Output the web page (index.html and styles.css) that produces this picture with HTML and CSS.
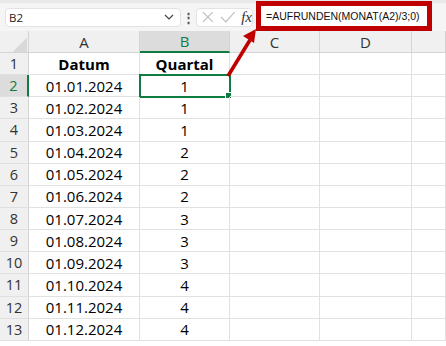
FILE: index.html
```html
<!DOCTYPE html>
<html lang="de">
<head>
<meta charset="UTF-8" />
<meta name="viewport" content="width=device-width, initial-scale=1" />
<title>Quartal aus Datum</title>
<link rel="stylesheet" href="styles.css">
</head>
<body>

<div class="toolbar">
  <div class="namebox">
    <span>B2</span>
    <svg class="chev" width="10" height="6" viewBox="0 0 10 6"><path d="M1 1l4 4 4-4" fill="none" stroke="#444" stroke-width="1.2"/></svg>
  </div>
  <div class="dots">⋮</div>
  <div class="actions">
    <svg width="14" height="14" viewBox="0 0 14 14"><path d="M2 2l10 10M12 2L2 12" stroke="#bdbdbd" stroke-width="1.2"/></svg>
    <svg width="16" height="14" viewBox="0 0 16 14"><path d="M1 7l5 5L15 2" fill="none" stroke="#bdbdbd" stroke-width="1.2"/></svg>
    <span class="fx">fx</span>
  </div>
  <div class="formula">=AUFRUNDEN(MONAT(A2)/3;0)</div>
</div>

<div class="sheet">
  <div class="corner"></div>
  <div class="colhead">A</div>
  <div class="colhead sel">B</div>
  <div class="colhead">C</div>
  <div class="colhead">D</div>
  <div class="colhead"></div>

  <div class="rowhead">1</div>
  <div class="cell bold">Datum</div>
  <div class="cell bold">Quartal</div>
  <div class="cell"></div><div class="cell"></div><div class="cell"></div>

  <div class="rowhead sel">2</div>
  <div class="cell">01.01.2024</div>
  <div class="cell active">1<span class="handle"></span></div>
  <div class="cell"></div><div class="cell"></div><div class="cell"></div>

  <div class="rowhead">3</div>
  <div class="cell">01.02.2024</div><div class="cell">1</div>
  <div class="cell"></div><div class="cell"></div><div class="cell"></div>

  <div class="rowhead">4</div>
  <div class="cell">01.03.2024</div><div class="cell">1</div>
  <div class="cell"></div><div class="cell"></div><div class="cell"></div>

  <div class="rowhead">5</div>
  <div class="cell">01.04.2024</div><div class="cell">2</div>
  <div class="cell"></div><div class="cell"></div><div class="cell"></div>

  <div class="rowhead">6</div>
  <div class="cell">01.05.2024</div><div class="cell">2</div>
  <div class="cell"></div><div class="cell"></div><div class="cell"></div>

  <div class="rowhead">7</div>
  <div class="cell">01.06.2024</div><div class="cell">2</div>
  <div class="cell"></div><div class="cell"></div><div class="cell"></div>

  <div class="rowhead">8</div>
  <div class="cell">01.07.2024</div><div class="cell">3</div>
  <div class="cell"></div><div class="cell"></div><div class="cell"></div>

  <div class="rowhead">9</div>
  <div class="cell">01.08.2024</div><div class="cell">3</div>
  <div class="cell"></div><div class="cell"></div><div class="cell"></div>

  <div class="rowhead">10</div>
  <div class="cell">01.09.2024</div><div class="cell">3</div>
  <div class="cell"></div><div class="cell"></div><div class="cell"></div>

  <div class="rowhead">11</div>
  <div class="cell">01.10.2024</div><div class="cell">4</div>
  <div class="cell"></div><div class="cell"></div><div class="cell"></div>

  <div class="rowhead">12</div>
  <div class="cell">01.11.2024</div><div class="cell">4</div>
  <div class="cell"></div><div class="cell"></div><div class="cell"></div>

  <div class="rowhead">13</div>
  <div class="cell">01.12.2024</div><div class="cell">4</div>
  <div class="cell"></div><div class="cell"></div><div class="cell"></div>
</div>

<!-- Pfeil von B2 zur Formel -->
<svg class="arrow" width="446" height="346" viewBox="0 0 446 346">
  <line x1="228" y1="76" x2="250" y2="40" stroke="#c00000" stroke-width="3.6"/>
  <polygon points="256,29 243,36 254,43" fill="#c00000"/>
</svg>

</body>
</html>
```

FILE: styles.css
```css
body {
  margin: 0;
  width: 446px;
  height: 346px;
  overflow: hidden;
  background: #fff;
  font-family: "Open Sans", "Noto Sans", sans-serif;
  color: #000;
  position: relative;
}

.toolbar {
  height: 31px;
  box-sizing: border-box;
  background: #f5f5f5;
  border-top: 3px solid #e8e8e8;
  display: flex;
  align-items: center;
  padding-left: 5px;
}
.namebox {
  width: 176px;
  height: 19px;
  box-sizing: border-box;
  background: #fff;
  border: 1px solid #e3e3e3;
  border-radius: 4px;
  display: flex;
  align-items: center;
  justify-content: space-between;
  padding: 0 6px 0 3px;
  font-size: 11.5px;
  color: #222;
}
.dots {
  width: 15px;
  text-align: center;
  font-size: 13px;
  color: #555;
  font-weight: 700;
}
.actions {
  width: 57px;
  height: 19px;
  box-sizing: border-box;
  background: #fff;
  border: 1px solid #e3e3e3;
  border-radius: 4px;
  display: flex;
  align-items: center;
  gap: 5px;
  padding-left: 4px;
}
.fx {
  font-family: "Liberation Serif", "DejaVu Serif", serif;
  font-style: italic;
  font-size: 15px;
  color: #333;
  margin-left: 1px;
}
.formula {
  margin-left: 3px;
  width: 176px;
  height: 30px;
  margin-top: -2px;
  box-sizing: border-box;
  border: 5px solid #c00000;
  background: #fff;
  padding-left: 5px;
  display: flex;
  align-items: center;
  font-family: "Liberation Sans", Arial, sans-serif;
  font-size: 10.5px;
  color: #111;
  white-space: nowrap;
}

.sheet {
  display: grid;
  grid-template-columns: 29px 111px 90px 90px 92px 1fr;
  grid-template-rows: 22px repeat(13, 22.15px);
}
.corner {
  background: #f0f0f0 linear-gradient(135deg, transparent 58%, #d9d9d9 58%) no-repeat 10px 4px / 17px 17px;
  border-right: 1px solid #d4d4d4;
  border-bottom: 1px solid #d4d4d4;
}
.colhead {
  background: #f0f0f0;
  border-right: 1px solid #d4d4d4;
  border-bottom: 1px solid #d4d4d4;
  display: flex;
  align-items: center;
  justify-content: center;
  font-size: 15px;
  color: #333;
}
.colhead.sel {
  background: #dcdcdc;
  color: #107c41;
  border-bottom: 2px solid #107c41;
}
.rowhead {
  background: #f0f0f0;
  border-right: 1px solid #d4d4d4;
  border-bottom: 1px solid #e0e0e0;
  display: flex;
  align-items: center;
  justify-content: center;
  font-size: 14.5px;
  color: #333;
}
.rowhead.sel {
  background: #dcdcdc;
  color: #107c41;
  border-right: 2px solid #107c41;
}
.cell {
  border-right: 1px solid #e1e1e1;
  border-bottom: 1px solid #e1e1e1;
  display: flex;
  align-items: center;
  justify-content: center;
  font-size: 15px;
  position: relative;
}
.cell.bold {
  font-weight: 700;
}
.cell.active {
  outline: 2px solid #107c41;
  outline-offset: -1px;
}
.handle {
  position: absolute;
  right: -3px;
  bottom: -3px;
  width: 5px;
  height: 5px;
  background: #107c41;
  border: 1px solid #fff;
}

.arrow {
  position: absolute;
  left: 0;
  top: 0;
  pointer-events: none;
}
```
